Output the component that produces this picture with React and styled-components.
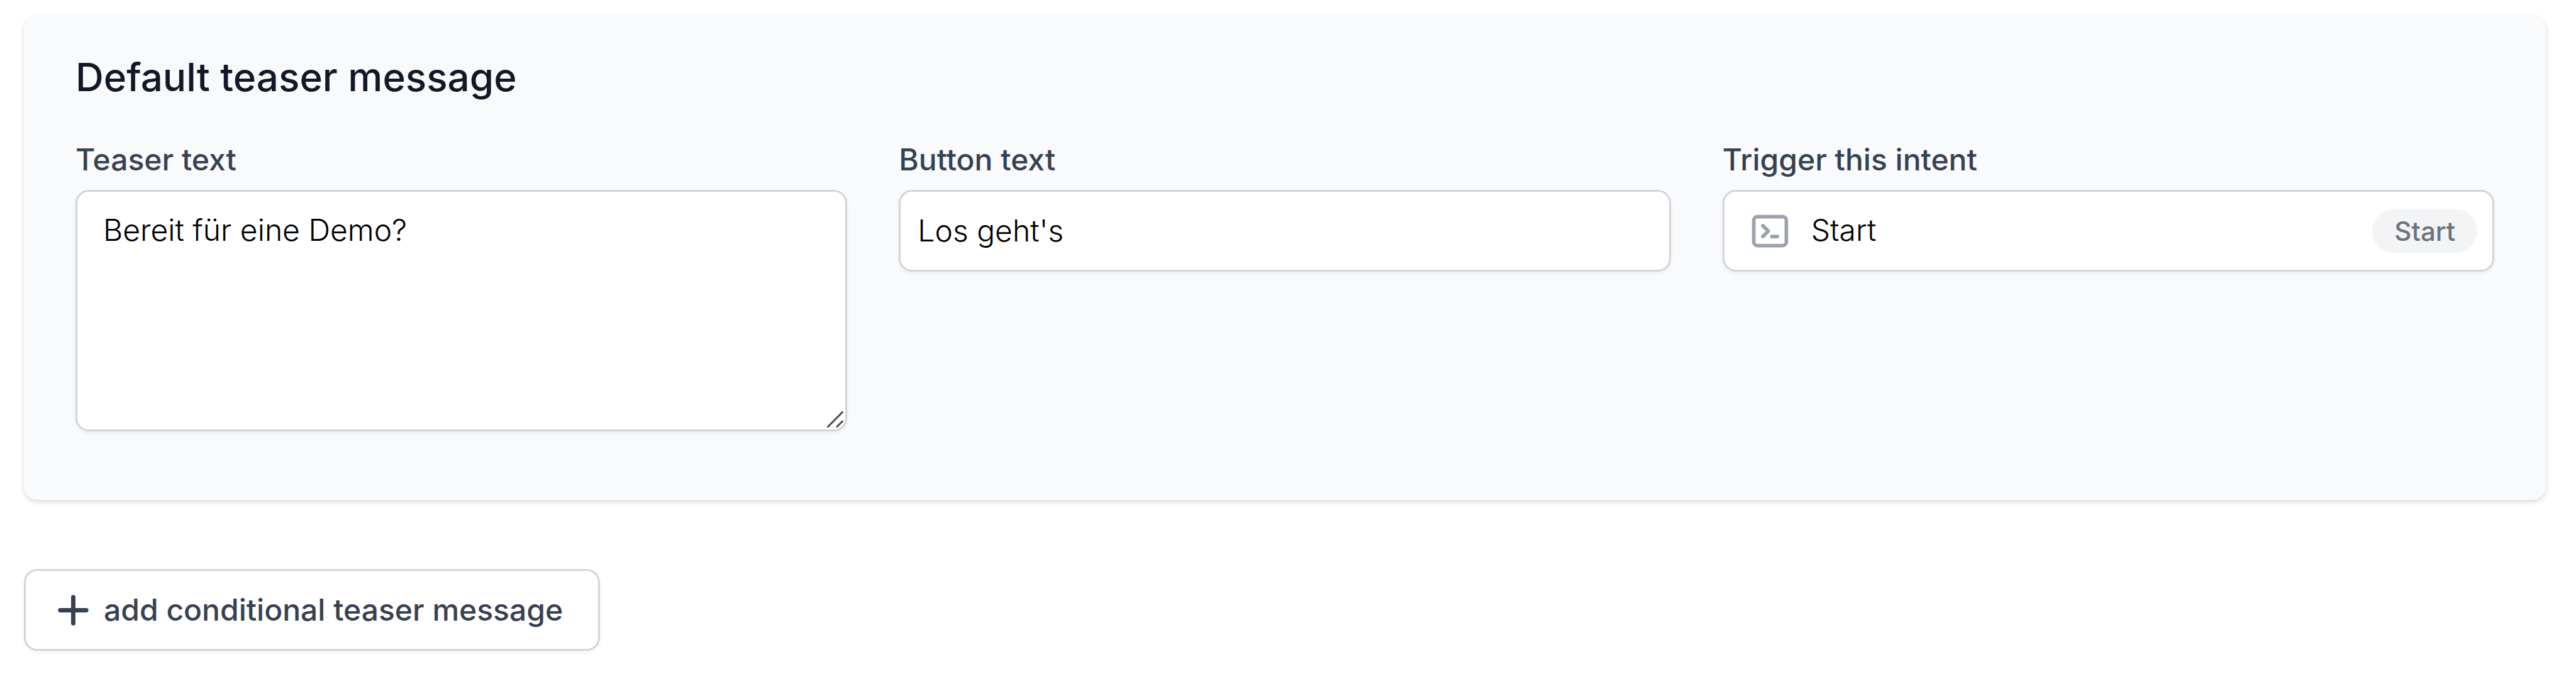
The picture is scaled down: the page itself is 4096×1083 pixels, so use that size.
import React, { useState } from "react";
import styled, { createGlobalStyle, css } from "styled-components";

const GlobalStyle = createGlobalStyle`
  *, *::before, *::after { box-sizing: border-box; }
  body {
    margin: 0;
    background: #ffffff;
    font-family: Inter, "Liberation Sans", sans-serif;
  }
`;

const Page = styled.main`
  display: flex;
  flex-direction: column;
  align-items: flex-start;
  gap: 110px;
  padding: 25px 48px 48px 38px;
`;

const Panel = styled.section`
  width: 100%;
  padding: 57px 82px 109px;
  border-radius: 21px;
  background: #f9fafc;
  box-shadow: 0 3px 10px rgba(0, 0, 0, 0.1), 0 3px 7px rgba(0, 0, 0, 0.06);
`;

const Title = styled.h2`
  margin: 0 0 56px;
  font-size: 62px;
  line-height: 82px;
  font-weight: 500;
  color: #111827;
`;

const Fields = styled.div`
  display: grid;
  grid-template-columns: repeat(3, minmax(0, 1fr));
  align-items: start;
  gap: 82px;
`;

const Field = styled.div`
  display: flex;
  flex-direction: column;
  gap: 14px;
`;

const Label = styled.label`
  font-size: 48px;
  line-height: 68px;
  font-weight: 500;
  color: #374151;
`;

const outline = css`
  border: 3px solid #d1d5db;
  border-radius: 21px;
  background: #ffffff;
  box-shadow: 0 3px 7px rgba(0, 0, 0, 0.05);
`;

const entry = css`
  font-family: inherit;
  font-size: 48px;
  line-height: 68px;
  font-weight: 300;
  color: #000000;
  outline: none;
`;

const TextInput = styled.input`
  ${outline}
  ${entry}
  width: 100%;
  height: 130px;
  padding: 0 27px 2px;
`;

const TextAreaBox = styled.div`
  position: relative;
  display: flex;
`;

const TextArea = styled.textarea`
  ${outline}
  ${entry}
  width: 100%;
  height: 384px;
  padding: 27px 41px;
  resize: none;
`;

const Grip = styled.svg`
  position: absolute;
  right: 6px;
  bottom: 6px;
  width: 26px;
  height: 26px;
  pointer-events: none;
`;

const Combo = styled.div`
  ${outline}
  display: flex;
  align-items: center;
  height: 130px;
  padding: 0 24px 0 38px;
`;

const ComboInput = styled.input`
  ${entry}
  flex: 1;
  min-width: 0;
  margin-left: 31px;
  padding: 0 0 2px;
  border: 0;
  background: transparent;
`;

const Icon = styled.svg`
  flex: none;
  width: 69px;
  height: 69px;
  color: ${(p) => p.$color};
`;

const Badge = styled.span`
  flex: none;
  padding: 0 35px;
  border-radius: 34px;
  background: #f3f4f6;
  font-size: 42px;
  line-height: 69px;
  font-weight: 500;
  color: #6b7280;
`;

const AddButton = styled.button`
  ${outline}
  display: inline-flex;
  align-items: center;
  gap: 14px;
  height: 130px;
  padding: 0 56px 0 41px;
  font-family: inherit;
  font-size: 48px;
  line-height: 68px;
  font-weight: 500;
  color: #374151;
  cursor: pointer;
`;

export default function App() {
  const [teaser, setTeaser] = useState("Bereit für eine Demo?");
  const [button, setButton] = useState("Los geht's");
  const [intent, setIntent] = useState("Start");

  return (
    <>
      <GlobalStyle />
      <Page>
        <Panel aria-labelledby="panel-title">
          <Title id="panel-title">Default teaser message</Title>
          <Fields>
            <Field>
              <Label htmlFor="teaser-text">Teaser text</Label>
              <TextAreaBox>
                <TextArea
                  id="teaser-text"
                  spellCheck={false}
                  value={teaser}
                  onChange={(e) => setTeaser(e.target.value)}
                />
                <Grip viewBox="0 0 26 26" aria-hidden="true">
                  <path d="M1.5 24.5l23-23M16 24.5l8.500-8.500" stroke="#4b4b4b" strokeWidth="3" strokeLinecap="round" />
                </Grip>
              </TextAreaBox>
            </Field>
            <Field>
              <Label htmlFor="button-text">Button text</Label>
              <TextInput
                id="button-text"
                type="text"
                spellCheck={false}
                value={button}
                onChange={(e) => setButton(e.target.value)}
              />
            </Field>
            <Field>
              <Label htmlFor="intent">Trigger this intent</Label>
              <Combo>
                <Icon $color="#9ca3af" viewBox="0 0 24 24" fill="none" aria-hidden="true">
                  <path
                    d="M8 9l3 3-3 3m5 0h3M5 20h14a2 2 0 002-2V6a2 2 0 00-2-2H5a2 2 0 00-2 2v12a2 2 0 002 2z"
                    stroke="currentColor"
                    strokeWidth="2"
                    strokeLinecap="round"
                    strokeLinejoin="round"
                  />
                </Icon>
                <ComboInput
                  id="intent"
                  type="text"
                  spellCheck={false}
                  value={intent}
                  onChange={(e) => setIntent(e.target.value)}
                />
                <Badge>Start</Badge>
              </Combo>
            </Field>
          </Fields>
        </Panel>
        <AddButton type="button">
          <Icon $color="#374151" viewBox="0 0 20 20" fill="currentColor" aria-hidden="true">
            <path d="M10 3a1 1 0 011 1v5h5a1 1 0 110 2h-5v5a1 1 0 11-2 0v-5H4a1 1 0 110-2h5V4a1 1 0 011-1z" />
          </Icon>
          add conditional teaser message
        </AddButton>
      </Page>
    </>
  );
}
